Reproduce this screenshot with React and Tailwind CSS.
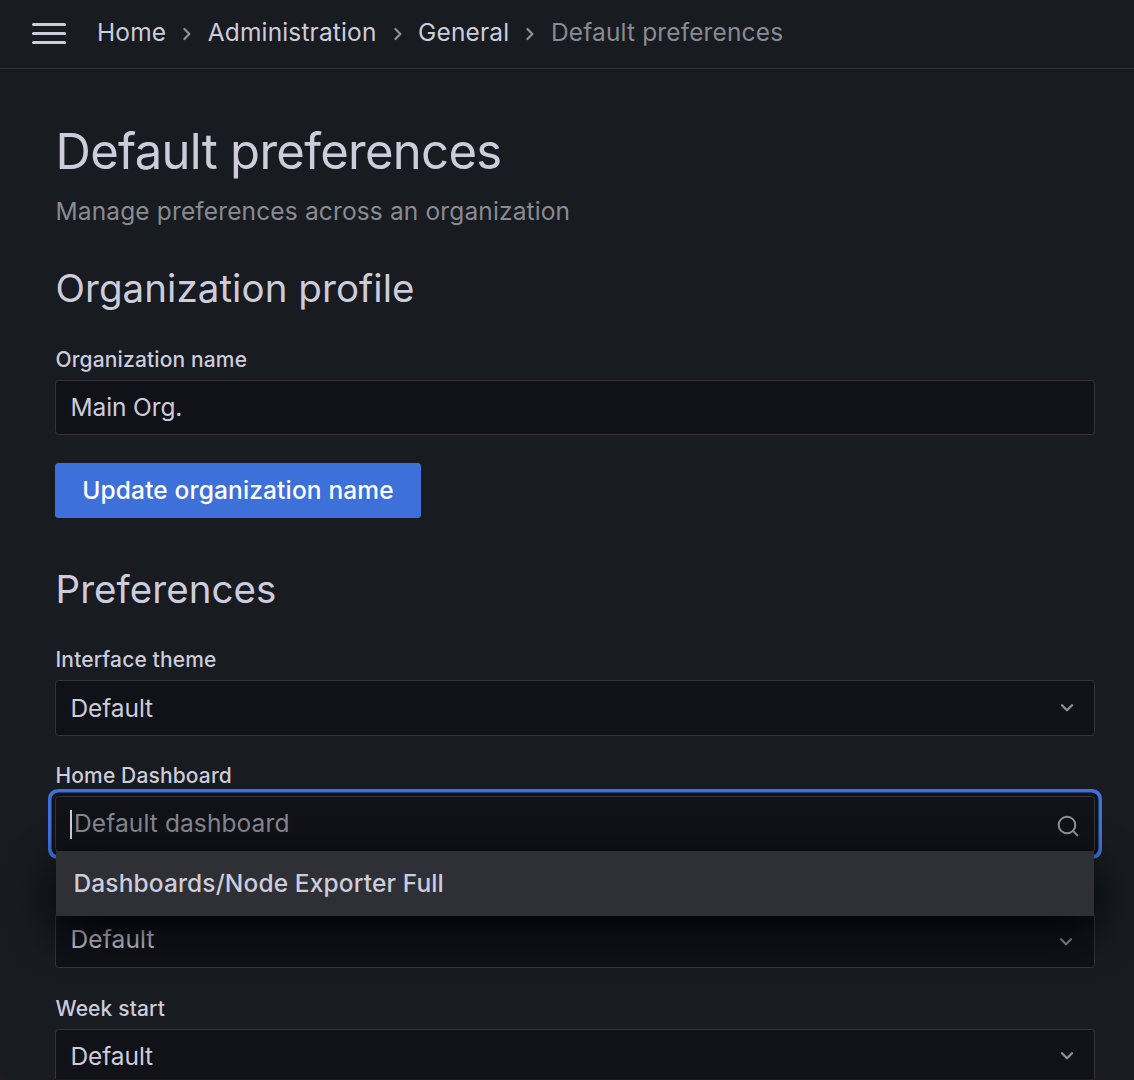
import React from "react";

const Chevron = ({ className = "" }) => (
  <svg className={"text-[#8f909b] " + className} width="14" height="10" viewBox="0 0 14 10" fill="none" stroke="currentColor" strokeWidth="2.3" strokeLinecap="round" strokeLinejoin="round">
    <path d="M2 2.2l5 5 5-5" />
  </svg>
);

const SearchIcon = () => (
  <svg className="mt-[3px] text-[#8f909b]" width="22" height="22" viewBox="0 0 22 22" fill="none" stroke="currentColor" strokeWidth="2" strokeLinecap="round">
    <circle cx="10" cy="10" r="8.3" />
    <path d="M16 16l4.4 4.4" />
  </svg>
);

const Separator = () => (
  <svg className="mt-[4px] w-[41.6px]" width="42" height="14" viewBox="0 0 42 14" fill="none" stroke="#8f909b" strokeWidth="2.3" strokeLinecap="round" strokeLinejoin="round">
    <path d="M18.6 2l5 5-5 5" />
  </svg>
);

const Label = ({ children }) => (
  <div className="h-[24px] pl-[0.5px] text-[21px] leading-[24px] font-medium tracking-[0.14px] whitespace-nowrap">{children}</div>
);

const Field = ({ children, className = "" }) => (
  <div className={"flex items-center justify-between rounded-[3.5px] border border-[#34353b] bg-[#111217] pl-[14.5px] text-[24.5px] " + className}>
    {children}
  </div>
);

export default function App() {
  return (
    <div className="h-[1080px] w-[1134px] overflow-hidden bg-[#1d1b1d] font-['Inter',sans-serif] text-[#ccccdc]">
      <div className="h-[1079px] overflow-hidden rounded-bl-[14px] bg-[#181b1f]">
        <header className="flex h-[69px] items-center border-b border-[#2d2f34] pb-px pl-[31.5px]">
          <div className="mr-[31px] flex w-[34.5px] flex-col gap-[5.4px]">
            <div className="h-[3.5px] rounded-full bg-[#ccccdc]" />
            <div className="h-[3.5px] rounded-full bg-[#ccccdc]" />
            <div className="h-[3.5px] rounded-full bg-[#ccccdc]" />
          </div>
          <nav className="-mt-[3px] flex items-center text-[24.5px] tracking-[0.14px] whitespace-nowrap">
            <span>Home</span><Separator />
            <span>Administration</span><Separator />
            <span>General</span><Separator />
            <span className="text-[#898a94]">Default preferences</span>
          </nav>
        </header>
        <main className="pr-[39px] pl-[55px]">
          <h1 className="pt-[54px] pl-[0.5px] text-[49px] leading-[58px] tracking-[-0.7px]">Default preferences</h1>
          <p className="mt-[15px] pl-[0.5px] text-[24.5px] leading-[30px] tracking-[0.14px] text-[#898a94]">Manage preferences across an organization</p>
          <h2 className="mt-[38px] pl-[0.5px] text-[38.5px] leading-[48px] tracking-[0.06px]">Organization profile</h2>
          <div className="mt-[36px]"><Label>Organization name</Label></div>
          <Field className="mt-[8px] h-[55px] tracking-[-0.12px]">Main Org.</Field>
          <button className="mt-[28px] block h-[55px] w-[366px] rounded-[3.5px] bg-[#3d71d9] text-[24.5px] font-medium tracking-[0.14px] text-white">Update organization name</button>
          <h2 className="mt-[47px] pl-[0.5px] text-[38.5px] leading-[48px] tracking-[0.06px]">Preferences</h2>
          <div className="mt-[35px]"><Label>Interface theme</Label></div>
          <Field className="mt-[8px] h-[56px] pr-[20px] tracking-[-0.1px]"><span>Default</span><Chevron /></Field>
          <div className="mt-[28px]"><Label>Home Dashboard</Label></div>
          <div className="relative mt-[8px]">
            <Field className="h-[56px] pr-[15px] shadow-[0_0_0_3.5px_#111217,0_0_0_7px_#3d71d9]">
              <span className="-ml-[0.5px] flex items-center">
                <span className="mr-[2px] h-[29px] w-[2px] bg-[#ccccdc]" />
                <span className="-mt-px tracking-[0.1px] text-[#85868f]">Default dashboard</span>
              </span>
              <SearchIcon />
            </Field>
            <div className="absolute top-[55px] right-px left-px flex h-[65px] items-center bg-[#2f3035] pl-[17.5px] text-[24.5px] font-medium tracking-[0.12px] shadow-[0_14px_42px_rgb(1,4,9)]">
              Dashboards/Node Exporter Full
            </div>
          </div>
          <Field className="mt-[60px] h-[56px] pr-[21px] tracking-[0.14px]"><span className="-mt-[2px]">Default</span><Chevron className="mt-[3px]" /></Field>
          <div className="mt-[29px]"><Label>Week start</Label></div>
          <Field className="mt-[8px] h-[56px] pr-[20px] pb-[2px] tracking-[-0.1px]"><span>Default</span><Chevron /></Field>
        </main>
      </div>
    </div>
  );
}
